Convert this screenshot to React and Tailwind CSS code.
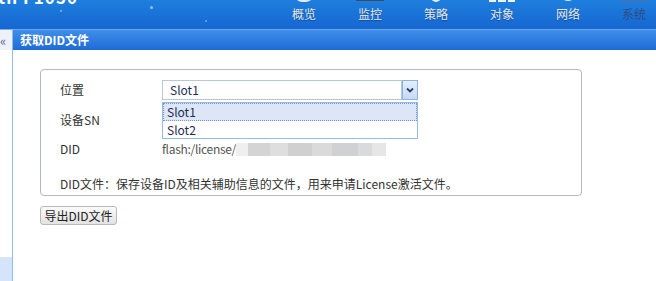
import { useState } from 'react';

const navItems = [
    { label: '概览', icon: 'circle' },
    { label: '监控', icon: 'bar' },
    { label: '策略', icon: 'shield' },
    { label: '对象', icon: 'boxes' },
    { label: '网络', icon: 'globe' },
    { label: '系统', icon: 'darkbar', active: true },
];

// only the bottom few pixels of the header icons are visible in the screenshot
const NavIcon = ({ type }) => {
    if (type === 'circle') return <div className="mx-auto mt-[-15px] h-[17px] w-[20px] rounded-full bg-[#e6ecf4]" />;
    if (type === 'globe') return <div className="mx-auto mt-[-15px] h-[16px] w-[16px] rounded-full bg-[#dfe6f0]" />;
    if (type === 'shield') return <div className="mx-auto mt-[-5px] h-[7px] w-[10px] rounded-b-full bg-[#e8eef6]" />;
    if (type === 'boxes') return <div className="mx-auto flex h-[2px] w-[26px] gap-[2px]"><div className="flex-1 bg-[#eef2f8]" /><div className="flex-1 bg-[#eef2f8]" /><div className="flex-1 bg-[#eef2f8]" /></div>;
    if (type === 'bar') return <div className="mx-auto h-[1px] w-[28px] bg-[#3b4a66]" />;
    return <div className="mx-auto h-[1px] w-[28px] bg-[#4d6fa8]" />;
};

const App = () => {
    const [value] = useState('Slot1');

    return (
        <div className="w-[656px] h-[281px] overflow-hidden bg-white text-[12px] text-[#333] flex flex-col" style={{ fontFamily: '"Noto Sans CJK SC", "Noto Sans", sans-serif' }}>
            {/* top header */}
            <div className="h-[29px] shrink-0 flex bg-gradient-to-b from-[#1e7fdc] to-[#1766d2] relative overflow-hidden">
                <div className="absolute left-[-2px] top-[-16px] text-white font-bold text-[17px] tracking-[1px]">th F1050</div>
                <div className="absolute left-[60px] top-[10px] h-[2px] w-[2px] rounded-full bg-[#7fb8f0]" />
                <div className="absolute left-[150px] top-[6px] h-[3px] w-[3px] rounded-full bg-[#8cc2f2]" />
                <div className="absolute left-[205px] top-[20px] h-[2px] w-[2px] rounded-full bg-[#6fb0ee]" />
                <div className="ml-auto mr-[-11px] flex">
                    {navItems.map((item) => (
                        <div key={item.label} className="w-[66px] h-[29px] flex flex-col">
                            <div className="h-[4px] overflow-hidden">
                                <NavIcon type={item.icon} />
                            </div>
                            <div className={`text-center text-[12px] leading-[18px] mt-[1px] ${item.active ? 'text-[#2f4c85]' : 'text-[#e4e9f1]'}`} style={{ textShadow: item.active ? 'none' : '0 1px 1px rgba(0,0,0,0.35)' }}>
                                {item.label}
                            </div>
                        </div>
                    ))}
                </div>
            </div>

            <div className="flex-1 flex">
                {/* collapsed left nav */}
                <div className="w-[13px] shrink-0 flex flex-col border-r border-[#94bbea]">
                    <div className="h-[21px] bg-[#eef2f8] border-t border-[#7fb0ec] flex items-center text-[#5a6f94] text-[13px] leading-none">«</div>
                    <div className="flex-1" />
                    <div className="h-[24px] bg-[#d3e4fb]" />
                </div>

                {/* main */}
                <div className="flex-1 flex flex-col">
                    <div className="h-[21px] shrink-0 border-t border-[#6aa6ee] bg-gradient-to-b from-[#3f8ee8] to-[#1e6bd6] flex items-center pl-[7px] text-white font-bold text-[12px]">
                        获取DID文件
                    </div>

                    <div className="pl-[27px] pt-[19px]">
                        <div className="relative w-[542px] h-[127px] border border-[#b4b6cc] rounded-[4px] pl-[19px] pt-[10px] flex flex-col">
                            <div className="flex h-[20px] items-center">
                                <div className="w-[102px]">位置</div>
                                <div className="w-[256px] h-[20px] flex">
                                    <div className="flex-1 border border-[#b7c7df] flex items-center pl-[7px] text-[#1b2b55]">{value}</div>
                                    <div className="w-[16px] border border-[#8db2e4] bg-gradient-to-b from-[#e4eefb] to-[#c5daf5] flex items-center justify-center">
                                        <svg width="8" height="6" viewBox="0 0 8 6"><path d="M1 1.5 L4 4.5 L7 1.5" stroke="#2c3f66" strokeWidth="1.8" fill="none" /></svg>
                                    </div>
                                </div>
                            </div>
                            <div className="flex h-[20px] items-center mt-[10px]">
                                <div className="w-[102px]">设备SN</div>
                            </div>
                            <div className="flex h-[20px] items-center mt-[9px]">
                                <div className="w-[102px]">DID</div>
                                <div className="flex items-center text-[#555]">
                                    <span className="tracking-[-0.3px]">flash:/license/</span>
                                    <div className="flex h-[13px]">
                                        <div className="w-[12px] bg-[#efefef]" />
                                        <div className="w-[22px] bg-[#d4d4d4]" />
                                        <div className="w-[18px] bg-[#dedede]" />
                                        <div className="w-[24px] bg-[#d0d0d0]" />
                                        <div className="w-[20px] bg-[#dadada]" />
                                        <div className="w-[26px] bg-[#cfd1d3]" />
                                        <div className="w-[14px] bg-[#d8dadb]" />
                                        <div className="w-[14px] bg-[#e6e6e6]" />
                                    </div>
                                </div>
                            </div>
                            <div className="flex h-[20px] items-center mt-[15px]">
                                DID文件：保存设备ID及相关辅助信息的文件，用来申请License激活文件。
                            </div>

                            {/* open dropdown list */}
                            <div className="absolute left-[121px] top-[32px] w-[256px] h-[37px] border border-[#94bbea] bg-white">
                                <div className="h-[18px] bg-[#dde6f6] border border-dotted border-[#7d96c2] flex items-center pl-[3px] text-[#1b2b55]">Slot1</div>
                                <div className="h-[17px] flex items-center pl-[4px] text-[#1b2b55]">Slot2</div>
                            </div>
                        </div>

                        <button className="mt-[10px] h-[19px] w-[77px] border border-[#b9b9b9] rounded-[3px] bg-gradient-to-b from-[#fbfbfb] to-[#e2e2e2] text-[12px] text-[#222] flex items-center justify-center leading-none">
                            导出DID文件
                        </button>
                    </div>
                </div>
            </div>
        </div>
    );
};

export default App;
